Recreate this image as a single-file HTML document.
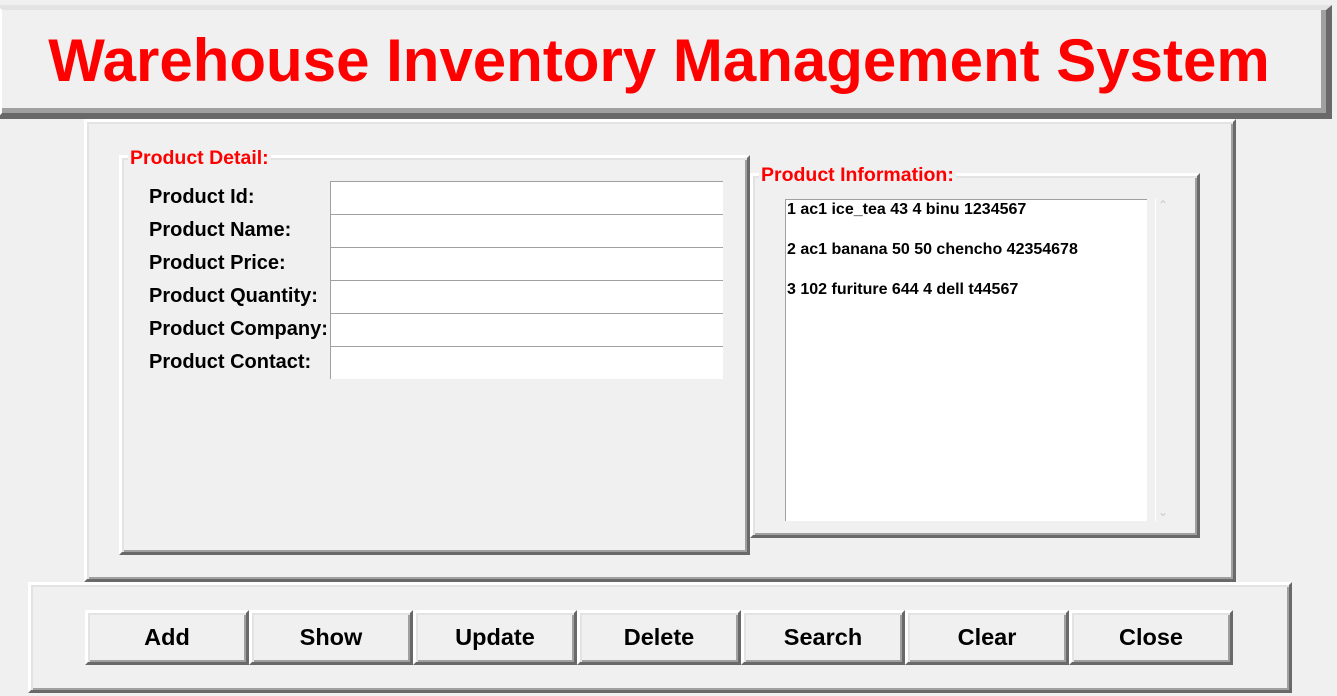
<!DOCTYPE html>
<html><head><meta charset="utf-8"><style>
body{margin:0;width:1337px;height:696px;background:#f0f0f0;position:relative;overflow:hidden;font-family:"Liberation Sans",Arial,sans-serif;font-weight:bold}
.r{position:absolute;box-sizing:border-box;border:3px solid;border-color:#fff #696969 #696969 #fff;box-shadow:inset 2px 2px 0 #e3e3e3,inset -2px -2px 0 #a0a0a0;background:#f0f0f0}
.lg{position:absolute;color:#f00;font-size:19.5px;background:#f0f0f0;padding:0 2px}
.lab{position:absolute;left:149px;font-size:20px;color:#000}
.ent{position:absolute;left:330px;width:393px;height:33px;background:#fff;box-sizing:border-box;border-top:1px solid #a0a0a0;border-left:1px solid #a0a0a0}
.btn{position:absolute;top:610px;width:164px;height:55px;font-size:23.5px;display:flex;align-items:center;justify-content:center}
.li{position:absolute;left:787px;font-size:16px}
</style></head><body>
<div class="r" style="left:-3px;top:5px;width:1335px;height:114px;border-width:5px 6px 6px 5px;border-top-color:#e3e3e3;box-shadow:inset -5px -5px 0 #a0a0a0"></div>
<div style="position:absolute;left:0;top:23px;width:1318px;text-align:center;color:#f00;font-size:60px;line-height:76px">Warehouse Inventory Management System</div>

<div class="r" style="left:84px;top:119px;width:1152px;height:463px"></div>
<div class="r" style="left:119px;top:155px;width:631px;height:400px"></div>
<div class="lg" style="left:128px;top:147px">Product Detail:</div>
<div class="lab" style="top:186px">Product Id:</div>
<div class="lab" style="top:219px">Product Name:</div>
<div class="lab" style="top:252px">Product Price:</div>
<div class="lab" style="top:285px">Product Quantity:</div>
<div class="lab" style="top:318px">Product Company:</div>
<div class="lab" style="top:351px">Product Contact:</div>
<div class="ent" style="top:181px"></div>
<div class="ent" style="top:214px"></div>
<div class="ent" style="top:247px"></div>
<div class="ent" style="top:280px"></div>
<div class="ent" style="top:313px"></div>
<div class="ent" style="top:346px"></div>

<div class="r" style="left:750px;top:173px;width:450px;height:365px"></div>
<div class="lg" style="left:759px;top:164px">Product Information:</div>
<div style="position:absolute;left:785px;top:199px;width:362px;height:322px;background:#fff;box-sizing:border-box;border-top:1px solid #a0a0a0;border-left:1px solid #a0a0a0"></div>
<div class="li" style="top:201px">1 ac1 ice_tea 43 4 binu 1234567</div>
<div class="li" style="top:241px">2 ac1 banana 50 50 chencho 42354678</div>
<div class="li" style="top:281px">3 102 furiture 644 4 dell t44567</div>
<div style="position:absolute;left:1155px;top:199px;width:1px;height:322px;background:#fff"></div>
<div style="position:absolute;left:1158px;top:198px;color:#c8c8c8;font-size:12px;font-weight:normal">&#8963;</div>
<div style="position:absolute;left:1158px;top:505px;color:#c8c8c8;font-size:12px;font-weight:normal">&#8964;</div>

<div class="r" style="left:28px;top:582px;width:1264px;height:111px"></div>
<div class="r btn" style="left:85px">Add</div>
<div class="r btn" style="left:249px">Show</div>
<div class="r btn" style="left:413px">Update</div>
<div class="r btn" style="left:577px">Delete</div>
<div class="r btn" style="left:741px">Search</div>
<div class="r btn" style="left:905px">Clear</div>
<div class="r btn" style="left:1069px">Close</div>
</body></html>
